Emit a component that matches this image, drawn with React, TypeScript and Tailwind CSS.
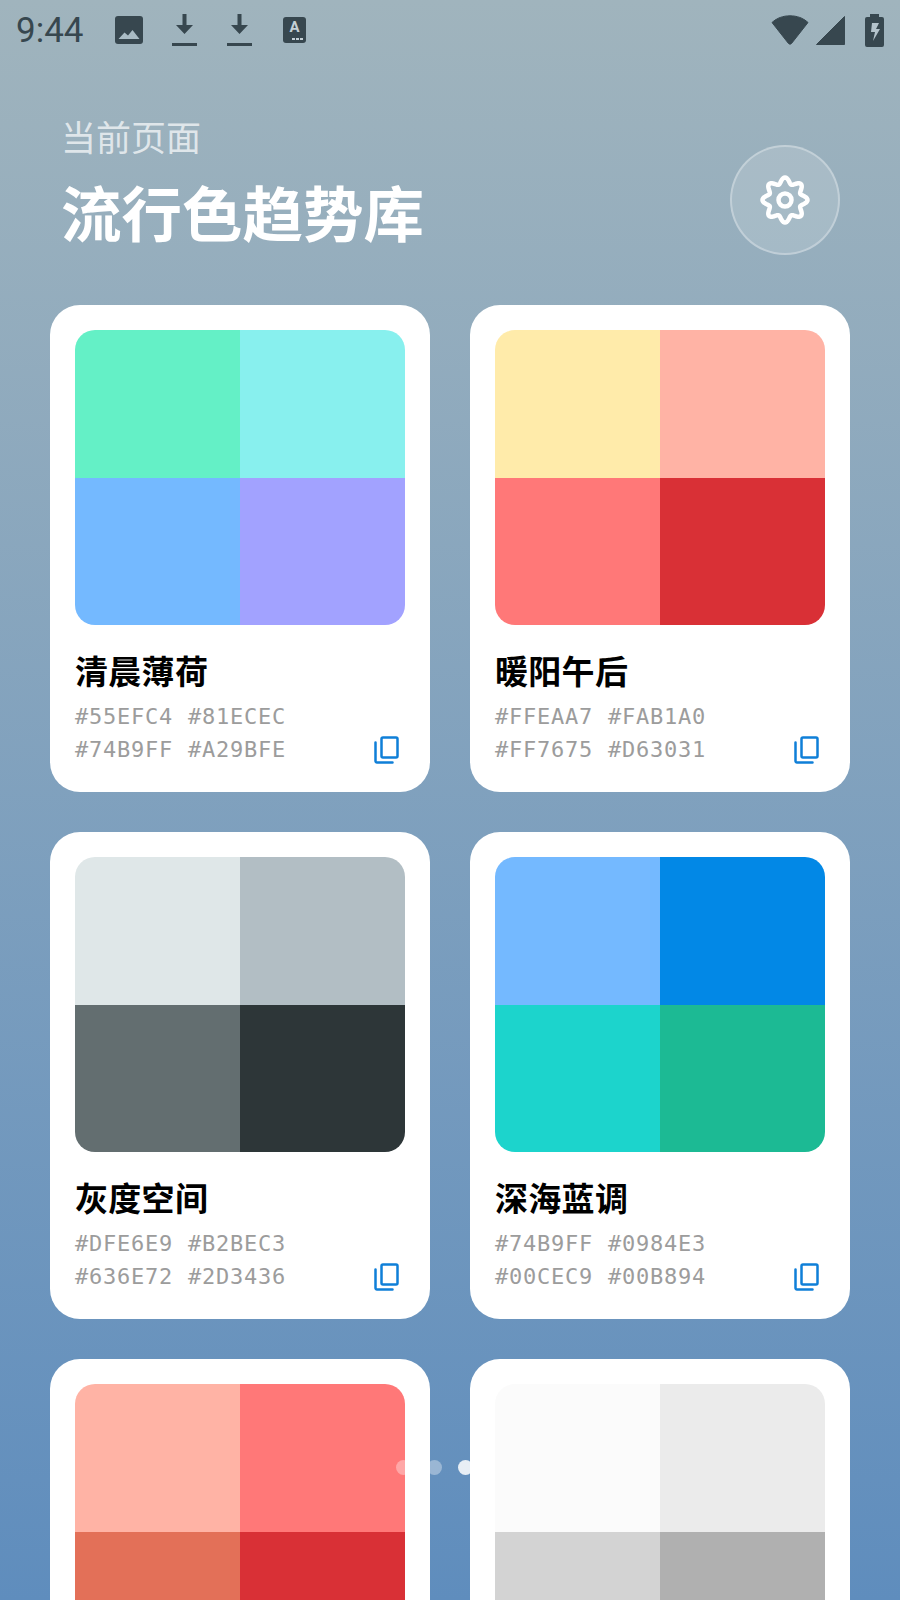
import React from "react";

const cards = [
  { name: "清晨薄荷", colors: ["#55EFC4", "#81ECEC", "#74B9FF", "#A29BFE"], show: ["#64F0C6", "#88F0EE", "#74B9FF", "#A2A2FF"] },
  { name: "暖阳午后", colors: ["#FFEAA7", "#FAB1A0", "#FF7675", "#D63031"], show: ["#FFEBAA", "#FFB3A5", "#FF7878", "#D93036"] },
  { name: "灰度空间", colors: ["#DFE6E9", "#B2BEC3", "#636E72", "#2D3436"], show: ["#DFE7E8", "#B2BEC4", "#636E70", "#2D3638"] },
  { name: "深海蓝调", colors: ["#74B9FF", "#0984E3", "#00CEC9", "#00B894"], show: ["#74B9FF", "#0288E6", "#1CD4CC", "#1CBA94"] },
];
const lastRow = [
  ["#FFB3A5", "#FF7878", "#E37058", "#D93036"],
  ["#FBFBFB", "#EBEBEB", "#D3D3D3", "#B0B0B0"],
];

function gearPath() {
  const pts: string[] = [];
  const n = 180;
  for (let i = 0; i < n; i++) {
    const t = (i / n) * Math.PI * 2;
    const r = 19.5 + 3 * Math.cos(8 * t);
    const a = t - Math.PI / 2;
    pts.push(`${(26 + r * Math.cos(a)).toFixed(2)},${(26 + r * Math.sin(a)).toFixed(2)}`);
  }
  return `M${pts.join("L")}Z`;
}

function Gear() {
  return (
    <svg width="52" height="52" viewBox="0 0 52 52" fill="none" stroke="white" strokeWidth="4.5" strokeLinejoin="round">
      <path d={gearPath()} />
      <circle cx="26" cy="26" r="6.5" strokeWidth="4.5" />
    </svg>
  );
}

function CopyIcon() {
  return (
    <svg width="25" height="28" viewBox="0 0 25 28" fill="none" stroke="#0F7FD8" strokeWidth="2.5" strokeLinejoin="round" strokeLinecap="round">
      <rect x="7.5" y="1.5" width="16" height="20" rx="1.5" />
      <path d="M1.5 6.5V25a1.5 1.5 0 0 0 1.5 1.5h15.5" />
    </svg>
  );
}

function Download() {
  const ink = "#37474F";
  return (
    <svg width="25" height="32" viewBox="0 0 25 32">
      <path d="M10.5 0h4v11h6.5l-8.500 9-8.500-9h6.500z" fill={ink} />
      <rect x="0" y="29" width="25" height="3" fill={ink} />
    </svg>
  );
}

function StatusBar() {
  const ink = "#37474F";
  return (
    <div className="flex h-[60px] items-center justify-between pl-[16px] pr-[16px]">
      <div className="flex items-center">
        <span className="w-[99px] text-[35px] font-[450] leading-none text-[#37474f]" style={{ fontFamily: "Roboto, sans-serif" }}>9:44</span>
        <svg width="28" height="28" viewBox="0 0 28 28">
          <rect x="0" y="0" width="28" height="28" rx="3" fill={ink} />
          <path d="M3.500 23l6-6.500 3.500 3 4.500-5.500 7 9z" fill="#a9bbc4" />
        </svg>
        <div className="ml-[29px]"><Download /></div>
        <div className="ml-[30px]"><Download /></div>
        <div className="relative ml-[31px] flex h-[26px] w-[23px] justify-center rounded-[3px] bg-[#37474f]">
          <span className="text-[15px] font-bold leading-[20px] text-[#c4d0d6]" style={{ fontFamily: "Roboto, sans-serif" }}>A</span>
          <span className="absolute bottom-[3px] right-[3px] flex gap-[1px]">
            <span className="h-[2px] w-[3px] bg-[#c4d0d6]" />
            <span className="h-[2px] w-[3px] bg-[#c4d0d6]" />
            <span className="h-[2px] w-[3px] bg-[#c4d0d6]" />
          </span>
        </div>
      </div>
      <div className="flex items-center">
        <svg width="38" height="30" viewBox="0 0 38 30">
          <path d="M1 7.500C6 3 12 .8 19 .8s13 2.200 18 6.700L20.500 28.500q-1.500 1.500-3 0z" fill={ink} stroke={ink} strokeLinejoin="round" />
        </svg>
        <svg className="ml-[7px]" width="29" height="29" viewBox="0 0 29 29">
          <path d="M.5 28.500L28.500.5v28z" fill={ink} stroke={ink} strokeLinejoin="round" />
        </svg>
        <svg className="ml-[20px]" width="19" height="33" viewBox="0 0 19 33">
          <path d="M5 0h9v3h3a2 2 0 0 1 2 2v26a2 2 0 0 1-2 2H2a2 2 0 0 1-2-2V5a2 2 0 0 1 2-2h3z" fill={ink} />
          <path d="M7 9h7l-3 6h4L8 27l2-9H6z" fill="#b4c3cb" />
        </svg>
      </div>
    </div>
  );
}

function Swatch({ colors }: { colors: string[] }) {
  return (
    <div className="grid h-[295px] shrink-0 grid-cols-2 grid-rows-2 overflow-hidden rounded-[20px]">
      {colors.map((c) => (
        <div key={c} style={{ backgroundColor: c }} />
      ))}
    </div>
  );
}

function Card({ name, colors, show }: { name: string; colors: string[]; show: string[] }) {
  return (
    <div className="flex h-[487px] flex-col rounded-[30px] bg-white p-[25px]">
      <Swatch colors={show} />
      <div className="mt-[23px] text-[33px] font-bold leading-[44px] tracking-[0.3px] text-black">{name}</div>
      <div className="mt-[8px] flex items-end justify-between">
        <div className="text-[22px] leading-[33px] tracking-[0.76px] text-[#9c9c9c]" style={{ fontFamily: "'DejaVu Sans Mono', monospace" }}>
          <div className="flex gap-[15px]"><span>{colors[0]}</span><span>{colors[1]}</span></div>
          <div className="flex gap-[15px]"><span>{colors[2]}</span><span>{colors[3]}</span></div>
        </div>
        <div className="mb-[2px] mr-[6px]"><CopyIcon /></div>
      </div>
    </div>
  );
}

export default function App() {
  return (
    <div
      className="relative h-[1600px] w-[900px] overflow-hidden bg-gradient-to-b from-[#a0b4bd] to-[#5f8dbd]"
      style={{ fontFamily: "'Noto Sans CJK SC', sans-serif" }}
    >
      <StatusBar />
      <div className="flex items-start justify-between pl-[61px] pr-[60px] pt-[51px]">
        <div>
          <div className="text-[35px] leading-[50px] text-white/70">当前页面</div>
          <div className="mt-[8px] text-[60.500px] font-bold leading-[84px] text-white">流行色趋势库</div>
        </div>
        <div className="mt-[34px] flex h-[110px] w-[110px] items-center justify-center rounded-full border-2 border-white/30 bg-white/15">
          <Gear />
        </div>
      </div>
      <div className="mt-[50px] grid grid-cols-2 gap-[40px] px-[50px]">
        {cards.map((c) => (
          <Card key={c.name} {...c} />
        ))}
        {lastRow.map((colors) => (
          <div key={colors[0]} className="h-[487px] rounded-[30px] bg-white p-[25px]">
            <Swatch colors={colors} />
          </div>
        ))}
      </div>
      <div className="absolute left-[396px] top-[1460px] flex gap-[16px]">
        <span className="h-[15px] w-[15px] rounded-full bg-white/35" />
        <span className="h-[15px] w-[15px] rounded-full bg-white/35" />
        <span className="h-[15px] w-[15px] rounded-full bg-white/85" />
      </div>
    </div>
  );
}
